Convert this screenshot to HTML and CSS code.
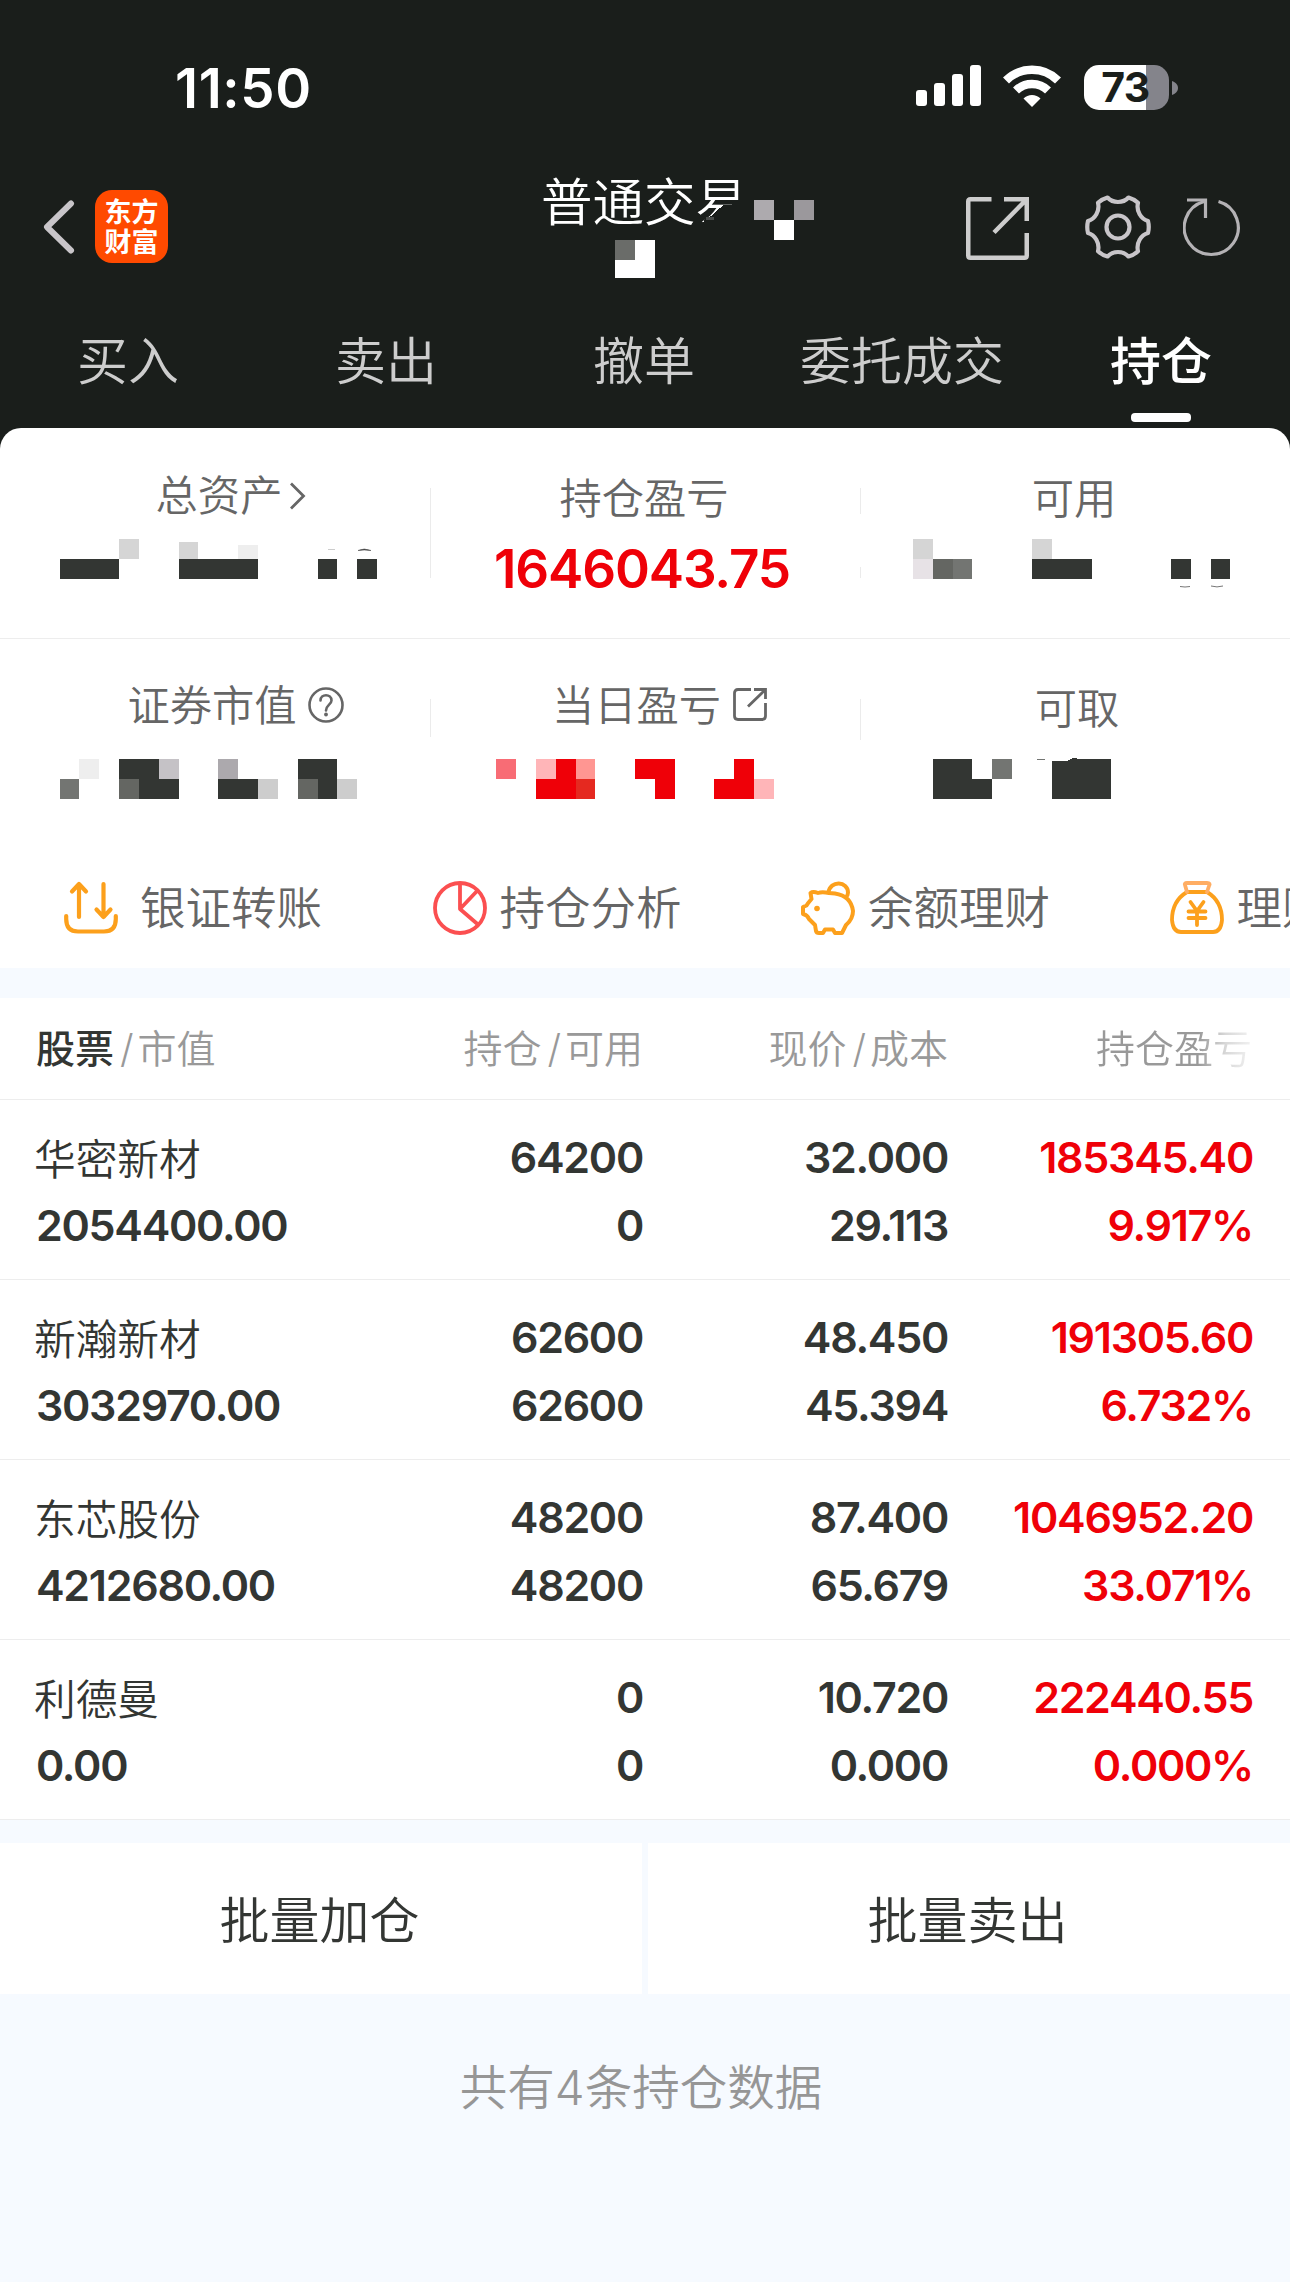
FILE: index.html
```html
<!DOCTYPE html>
<html lang="zh-CN">
<head>
<meta charset="utf-8">
<title>持仓</title>
<link rel="stylesheet" href="styles.css">
</head>
<body>
<div class="status">
  <span class="clock">11:50</span>
  <div class="status-icons">
    <svg class="signal" width="65" height="41" viewBox="0 0 65 41" fill="#fff"><rect y="25" width="11" height="16" rx="3"/><rect x="18" y="18" width="11" height="23" rx="3"/><rect x="36" y="9" width="11" height="32" rx="3"/><rect x="54" width="11" height="41" rx="3"/></svg>
    <svg class="wifi" width="58" height="42" viewBox="0 0 58 42" fill="none" stroke="#fff" stroke-width="8.500"><path d="M3 15.500A37 37 0 0 1 55 15.500"/><path d="M13 25.500A23 23 0 0 1 45 25.500"/><path d="M20.500 33.500A12 12 0 0 1 37.500 33.500L29 42Z" fill="#fff" stroke="none"/></svg>
    <div class="battery"><span>73</span></div>
    <svg width="6" height="14" viewBox="0 0 6 14" fill="#84848b"><path d="M0 0C3 1 6 3.500 6 7S3 13 0 14Z"/></svg>
  </div>
</div>

<div class="nav">
  <svg class="back" width="32" height="54" viewBox="0 0 32 54" fill="none" stroke="#c8c5c9" stroke-width="6" stroke-linecap="round" stroke-linejoin="round"><path d="M28 3.500L4 27L28 50.500"/></svg>
  <div class="logo"><span>东方</span><span>财富</span></div>
  <div class="title">普通交易
    <svg class="title-mask" width="280" height="103" viewBox="534 175 280 103" shape-rendering="crispEdges"><path fill="#1a1e1b" d="M704 220L711 216L724 204.500H732L740 202H748V230H702Z"/><path fill="#4a4d4b" d="M706 217h8v3h-8z"/><path fill="#adaaae" d="M754 200h20v20h-20z"/><path fill="#9b989c" d="M794 200h20v20h-20z"/><path fill="#fff" d="M774 220h20v20h-20zM635 240h20v40h-40v-20h20z"/><path fill="#6a6c69" d="M615 240h20v20h-20z"/></svg>
  </div>
  <svg class="share" width="63" height="63" viewBox="0 0 63 63" fill="none" stroke="#cdcdcd" stroke-width="4.500"><path d="M25.500 2.250H4.500Q2.250 2.250 2.250 4.500V58.500Q2.250 60.750 4.500 60.750H58.500Q60.750 60.750 60.750 58.500V36M38 2.250H60.750V24M60 3L28 35.500"/></svg>
  <svg class="gear" width="66" height="66" viewBox="-33 -33 66 66" fill="none" stroke="#c8c5c9" stroke-width="4.200" stroke-linejoin="round"><circle r="11.500"/><path d="M-10.500 -29.500C-5 -23.500 5 -23.500 10.500 -29.500Q16 -28 20 -24.200C18 -16 23 -8 30 -6Q31.500 0 30 6C23 8 18 16 20 24.200Q16 28 10.500 29.500C5 23.500 -5 23.500 -10.500 29.500Q-16 28 -20 24.200C-18 16 -23 8 -30 6Q-31.500 0 -30 -6C-23 -8 -18 -16 -20 -24.200Q-16 -28 -10.500 -29.500Z"/></svg>
  <svg class="refresh" width="60" height="60" viewBox="0 0 60 60" fill="none" stroke="#b4b2b5" stroke-width="3.200"><path d="M35.500 4.500A27 27 0 1 1 21 4.500"/><path d="M4 3H22.500V21"/></svg>
</div>

<div class="tabs">
  <div class="tab">买入</div><div class="tab">卖出</div><div class="tab">撤单</div><div class="tab">委托成交</div><div class="tab active">持仓</div>
</div>

<div class="sheet">
  <div class="summary">
    <div class="cell">
      <div class="label assets">总资产<svg class="more" width="17" height="28" viewBox="0 0 17 28" fill="none" stroke="#666" stroke-width="2.800"><path d="M2 1.500L14.500 14L2 26.500"/></svg></div>
      <svg class="mosaic" width="430" height="60" viewBox="0 535 430 60"><g shape-rendering="crispEdges"><path fill="#d5d5d5" d="M119 539h20v20h-20zM179 542h19v17h-19z"/><path fill="#eee" d="M238 545h20v14h-20z"/><path fill="#333633" d="M60 559h59v20H60zM179 559h79v20h-79zM318 559h19v20h-19zM357 559h20v20h-20z"/></g><path d="M358 550.500Q364 547.500 371 550.500Q364 549.500 358 550.500Z" fill="#333" stroke="#555" stroke-width=".6"/><path d="M328 549.500h7" stroke="#ccc"/></svg>
    </div>
    <div class="cell">
      <div class="label">持仓盈亏</div>
      <div class="total">1646043.75</div>
      <i class="rule" style="height:90px"></i>
    </div>
    <div class="cell">
      <div class="label">可用</div>
      <svg class="mosaic" width="430" height="60" viewBox="860 535 430 60"><g shape-rendering="crispEdges"><path fill="#d5d5d5" d="M913 539h20v20h-20zM1032 539h20v20h-20z"/><path fill="#e7e2e6" d="M913 559h20v20h-20z"/><path fill="#646662" d="M933 559h20v20h-20z"/><path fill="#737572" d="M953 559h19v20h-19z"/><path fill="#333633" d="M1032 559h60v20h-60zM1171 559h20v20h-20zM1211 559h19v20h-19z"/></g><path d="M1180 586.500Q1185 587.500 1190 586.500M1211 586Q1217 587.800 1223 586" stroke="#777" fill="none"/></svg>
      <i class="rule" style="height:26px"></i><i class="rule low"></i>
    </div>
  </div>
  <div class="summary second">
    <div class="cell">
      <div class="label value">证券市值<svg class="help" width="36" height="36" viewBox="0 0 36 36" fill="none" stroke="#666" stroke-width="2.600"><circle cx="18" cy="18" r="16.500"/><path d="M12.500 13.500C12.500 6.500 23.500 6.500 23.500 13.500C23.500 17.500 18 18 18 23.500" stroke-linecap="round"/><circle cx="18" cy="27.500" r="1.900" fill="#666" stroke="none"/></svg></div>
      <svg class="mosaic" width="430" height="60" viewBox="0 745 430 60" shape-rendering="crispEdges"><path fill="#737572" d="M60 779h19v20H60z"/><path fill="#eee" d="M79 759h20v20H79z"/><path fill="#333633" d="M119 759h40v20h20v20h-40v-20h-20zM218 779h40v20h-40zM298 759h39v40h-19v-20h-20z"/><path fill="#c5c2c6" d="M159 759h20v20h-20z"/><path fill="#646662" d="M119 779h20v20h-20zM298 779h20v20h-20z"/><path fill="#aca9ad" d="M218 759h20v20h-20z"/><path fill="#cdcdcd" d="M258 779h20v20h-20zM337 779h20v20h-20z"/></svg>
    </div>
    <div class="cell">
      <div class="label today">当日盈亏<svg class="open" width="34" height="34" viewBox="0 0 34 34" fill="none" stroke="#666" stroke-width="2.800"><path d="M18 1.500H5Q1.500 1.500 1.500 5V28Q1.500 31.500 5 31.500H29Q32.500 31.500 32.500 28V15M21 1.500H32.500V11M32 2L15 18.500"/></svg></div>
      <svg class="mosaic" width="430" height="60" viewBox="430 745 430 60" shape-rendering="crispEdges"><path fill="#f86c75" d="M496 759h20v20h-20z"/><path fill="#ffb5b8" d="M536 759h20v20h-20zM754 779h20v20h-20z"/><path fill="#ef0008" d="M556 759h20v40h-40v-20h20zM635 759h40v40h-20v-20h-20zM734 759h20v40h-40v-20h20z"/><path fill="#ff9692" d="M576 759h19v20h-19z"/><path fill="#e52920" d="M576 779h19v20h-19z"/></svg>
      <i class="rule" style="height:38px"></i>
    </div>
    <div class="cell">
      <div class="label cash">可取</div>
      <svg class="mosaic" width="430" height="60" viewBox="860 745 430 60" shape-rendering="crispEdges"><path fill="#333633" d="M933 759h39v20h20v20h-59zM1052 761h15l6-3 8 1h30v40h-59z"/><path fill="#737572" d="M992 759h20v20h-20zM1037 758.500h8v1h-8z"/></svg>
      <i class="rule" style="height:41px"></i>
    </div>
  </div>

  <div class="shortcuts">
    <div class="shortcut first"><svg width="54" height="54" viewBox="0 0 54 54" fill="none" stroke="#fca01c" stroke-width="4.200" stroke-linecap="round" stroke-linejoin="round"><path d="M15 36V3M8 10.500L15 3L22 10.500M39.500 3V36M32.500 28.500L39.500 36L46.500 28.500M2.200 35V38Q2.200 50.500 14 50.500H40Q51.800 50.500 51.800 38V35"/></svg>银证转账</div>
    <div class="shortcut"><svg width="54" height="54" viewBox="0 0 54 54" fill="none" stroke="#fb4f50" stroke-width="3.800"><circle cx="27" cy="27" r="25"/><path d="M27 2V28L45 43.500M27 28L44.500 9.500" stroke-linejoin="round"/></svg>持仓分析</div>
    <div class="shortcut"><svg width="54" height="54" viewBox="0 0 54 54" fill="none" stroke="#fca01c" stroke-width="4" stroke-linejoin="round"><path d="M28 12Q21 10.500 17 12Q12 10 9.500 12L10.500 18Q7 22 5.500 24.500L2 26V33Q6.500 34 8 38L14 44L15 50Q15.500 52 18 52H22L24 48.500H32L34 52H41L45 44Q52 38 52 30Q50 15 34 12.500Z"/><path d="M27.500 11.500C29 -1 47 0 47 11.500Q47 14.500 45 16"/><circle cx="16" cy="27.500" r="2.800" fill="#fca01c" stroke="none"/></svg>余额理财</div>
    <div class="shortcut"><svg width="54" height="54" viewBox="0 0 54 54" fill="none" stroke="#fca01c" stroke-width="3.800" stroke-linejoin="round" stroke-linecap="round"><path d="M17 11C7 17 2 27 2 39Q3 51 11 51H43Q51 51 52 39C52 27 47 17 37 11Z"/><path d="M17 11L15 4Q14 2 17 2H37Q41 2 39 5L37 11" stroke="#ffad63"/><path d="M20.500 21L27 30L33.500 21M18.500 30.500H35.500M18.500 37H35.500M27 30V44"/></svg>理财</div>
  </div>

  <div class="strip"></div>

  <div class="grid head">
    <div><b>股票</b><i>/</i>市值</div><div>持仓<i>/</i>可用</div><div>现价<i>/</i>成本</div><div class="fade">持仓盈亏</div>
  </div>
  <div class="grid row"><div class="name">华密新材</div><div>64200</div><div>32.000</div><div class="gain">185345.40</div><div>2054400.00</div><div>0</div><div>29.113</div><div class="gain">9.917%</div></div>
  <div class="grid row"><div class="name">新瀚新材</div><div>62600</div><div>48.450</div><div class="gain">191305.60</div><div>3032970.00</div><div>62600</div><div>45.394</div><div class="gain">6.732%</div></div>
  <div class="grid row"><div class="name">东芯股份</div><div>48200</div><div>87.400</div><div class="gain">1046952.20</div><div>4212680.00</div><div>48200</div><div>65.679</div><div class="gain">33.071%</div></div>
  <div class="grid row"><div class="name">利德曼</div><div>0</div><div>10.720</div><div class="gain">222440.55</div><div>0.00</div><div>0</div><div>0.000</div><div class="gain">0.000%</div></div>

  <div class="actions"><div>批量加仓</div><div>批量卖出</div></div>
  <div class="count">共有4条持仓数据</div>
</div>
</body>
</html>
```

FILE: styles.css
```css
* { box-sizing: border-box; }
body {
  margin: 0;
  width: 1290px;
  height: 2282px;
  overflow: hidden;
  background: #1a1e1b;
  color: #333633;
  font-family: Inter, "Noto Sans CJK SC", sans-serif;
  font-weight: 350;
}
svg { display: block; flex: none; }
i { font-style: normal; }

.status { display: flex; justify-content: space-between; align-items: center; height: 175px; padding: 0 112px 0 175px; color: #fff; }
.clock { font-size: 54.500px; font-weight: 600; line-height: 58px; letter-spacing: .6px; }
.status-icons { display: flex; align-items: center; }
.signal { margin: -4px 22px 0 0; }
.wifi { margin: -3px 23px 0 0; }
.battery { width: 85px; height: 45px; margin-right: 3px; border-radius: 15px; background: linear-gradient(90deg, #fff 62px, #84848b 62px); color: #1a1e1b; font-size: 41px; font-weight: 650; line-height: 44px; text-align: center; letter-spacing: -.5px; }
.battery span { margin-right: 2px; }

.nav { display: flex; align-items: center; height: 103px; padding-left: 43px; }
.logo { display: flex; flex-direction: column; align-items: center; justify-content: center; width: 73px; height: 73px; margin-left: 20px; padding-top: 2px; border-radius: 17px; background: #ff4a00; color: #fff; font-size: 27px; font-weight: 700; line-height: 30px; }
.title { position: relative; width: 280px; height: 103px; margin-left: 366px; padding-left: 7px; color: #fff; font-size: 51.500px; line-height: 55px; }
.title-mask { position: absolute; left: 0; top: 0; }
.share { margin: 4px 0 0 152px; }
.gear { margin-left: 56px; }
.refresh { margin-left: 32px; }

.tabs { display: grid; grid-template-columns: repeat(5, 258px); height: 150px; padding-top: 54px; }
.tab { display: flex; flex-direction: column; align-items: center; margin-left: -2px; color: #cdcdcd; font-size: 51px; line-height: 60px; }
.active { margin-left: 0; color: #fff; font-weight: 500; }
.active::after { content: ""; width: 60px; height: 9px; margin-top: 21px; border-radius: 4px; background: #fff; }

.sheet { height: 1854px; border-radius: 21px 21px 0 0; background: #fff; overflow: hidden; }
.summary { display: grid; grid-template-columns: repeat(3, 430px); height: 211px; border-bottom: 1px solid #ededed; }
.second { height: 212px; border: 0; }
.cell { position: relative; }
.label { display: flex; align-items: center; justify-content: center; height: 107px; padding: 34px 2px 0 0; color: #666; font-size: 42.300px; line-height: 73px; }
.second .label { height: 106px; }
.label.assets { padding: 28px 0 0 32px; }
.label.value { padding: 26px 0 0 41px; }
.label.today { padding: 26px 0 0 29px; }
.label.cash { padding: 33px 0 0 4px; }
.more { margin-left: 7px; }
.help { margin-left: 11px; }
.open { margin-left: 12px; }
.total { margin-left: -6px; color: #ef0008; font-size: 53px; font-weight: 600; line-height: 68px; letter-spacing: -1.150px; text-align: center; }
.rule { position: absolute; left: 0; top: 60px; width: 1px; background: #ebebeb; }
.low { top: 139px; height: 11px; }

.shortcuts { display: flex; height: 117px; padding: 30px 0 0 64px; }
.shortcut { display: flex; flex: none; gap: 13px; width: 368.500px; height: 54px; color: #666; font-size: 45.500px; line-height: 56px; white-space: nowrap; }
.first { gap: 22px; }
.strip { height: 30px; background: #f6faff; }

.grid { display: grid; grid-template-columns: 392px 215px 305px 305px; padding-left: 36px; border-bottom: 1px solid #ededed; }
.grid > div { text-align: right; white-space: nowrap; }
.grid > div:nth-child(4n+1) { text-align: left; }
.head { height: 102px; padding-top: 21px; color: #999; font-size: 39px; line-height: 60px; }
.head b { color: #333633; font-weight: 500; }
.head i { margin: 0 4px 0 6px; }
.head .fade { padding-right: 1px; background: linear-gradient(90deg, #999 82%, #d8d8d8 91%, #fff 104%); background-clip: text; color: transparent; }
.row { grid-template-rows: 68px 68px; height: 180px; padding-top: 24px; font-size: 43px; font-weight: 600; line-height: 67px; letter-spacing: -1.300px; }
.row .name { margin-left: -2px; font-size: 41.700px; font-weight: 350; line-height: 72px; letter-spacing: 0; }
.gain { color: #ef0008; }

.actions { display: grid; grid-template-columns: 642px 642px; column-gap: 6px; padding: 23px 0 0; background: #f6faff; }
.actions div { height: 151px; padding-right: 3px; background: #fff; font-size: 50px; line-height: 156px; text-align: center; }
.count { height: 288px; padding: 63px 8px 0 0; background: #f6faff; color: #969696; font-size: 47.500px; line-height: 62px; text-align: center; }
```
